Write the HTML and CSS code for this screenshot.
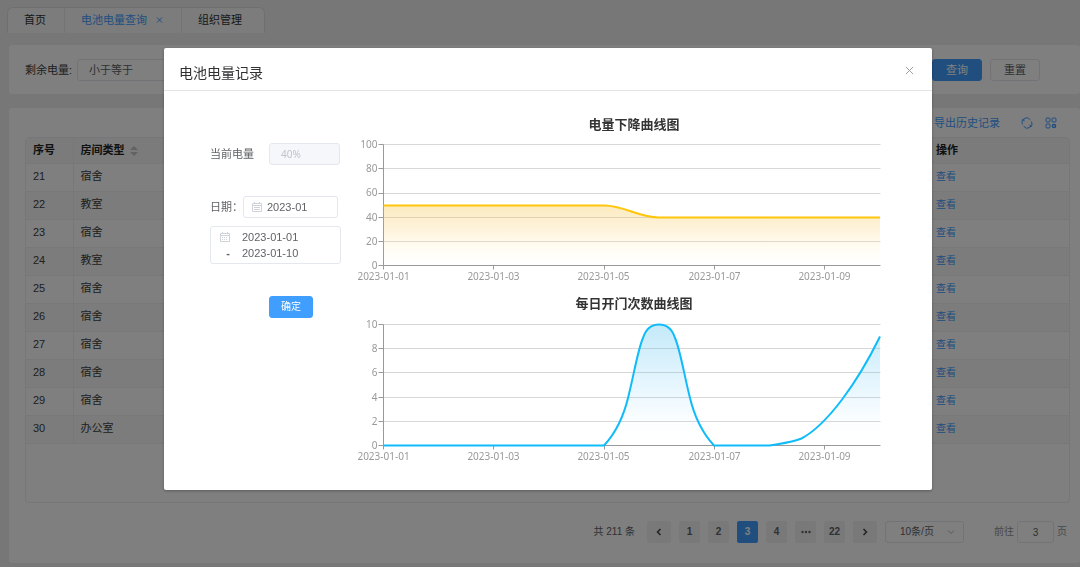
FILE: index.html
```html
<!DOCTYPE html>
<html lang="zh-CN">
<head>
<meta charset="utf-8">
<title>电池电量查询</title>
<link rel="stylesheet" href="styles.css">
</head>
<body>
<div class="page">
  <nav class="tabs">
    <a class="tab" href="#">首页</a>
    <a class="tab tab-active" href="#">电池电量查询
      <svg class="tab-close" viewBox="0 0 8 8"><path d="M2 1.5l5 5M7 1.5l-5 5"/></svg>
    </a>
    <a class="tab" href="#">组织管理</a>
  </nav>

  <form class="card filter">
    <label for="level">剩余电量:</label>
    <select id="level" class="field filter-select"><option>小于等于</option></select>
    <div class="filter-actions">
      <button type="button" class="btn btn-primary">查询</button>
      <button type="button" class="btn">重置</button>
    </div>
  </form>

  <section class="card list">
    <div class="toolbar">
      <a class="link" href="#">导出历史记录</a>
      <button type="button" class="icon-btn" aria-label="刷新">
        <svg viewBox="0 0 12 12"><path d="M1.4 7.4A4.6 4.6 0 0 1 9.4 2.9M10.6 4.6A4.6 4.6 0 0 1 2.6 9.1"/><path class="solid" d="M.8 2.2h2.6v2.6zM11.2 9.8H8.6V7.2z"/></svg>
      </button>
      <button type="button" class="icon-btn" aria-label="列设置">
        <svg viewBox="0 0 12 12"><rect x="1" y="1" width="4" height="4" rx="1"/><rect x="7" y="1" width="4" height="4" rx="1"/><rect x="1" y="7" width="4" height="4" rx="1"/><circle cx="9" cy="9" r="1.6" stroke-width="1.5"/></svg>
      </button>
    </div>
    <div class="table-box">
      <table class="table">
        <colgroup><col class="col-no"><col class="col-type"><col><col class="col-op"></colgroup>
        <thead>
          <tr><th>序号</th><th>房间类型 <svg class="sort" viewBox="0 0 8 12"><path d="M0 5l4-4 4 4zM0 7h8l-4 4z"/></svg></th><th></th><th>操作</th></tr>
        </thead>
        <tbody>
          <tr><td>21</td><td>宿舍</td><td></td><td><a class="link" href="#">查看</a></td></tr>
          <tr><td>22</td><td>教室</td><td></td><td><a class="link" href="#">查看</a></td></tr>
          <tr><td>23</td><td>宿舍</td><td></td><td><a class="link" href="#">查看</a></td></tr>
          <tr><td>24</td><td>教室</td><td></td><td><a class="link" href="#">查看</a></td></tr>
          <tr><td>25</td><td>宿舍</td><td></td><td><a class="link" href="#">查看</a></td></tr>
          <tr><td>26</td><td>宿舍</td><td></td><td><a class="link" href="#">查看</a></td></tr>
          <tr><td>27</td><td>宿舍</td><td></td><td><a class="link" href="#">查看</a></td></tr>
          <tr><td>28</td><td>宿舍</td><td></td><td><a class="link" href="#">查看</a></td></tr>
          <tr><td>29</td><td>宿舍</td><td></td><td><a class="link" href="#">查看</a></td></tr>
          <tr><td>30</td><td>办公室</td><td></td><td><a class="link" href="#">查看</a></td></tr>
        </tbody>
      </table>
    </div>
    <div class="pager">
      <span class="pager-total">共 211 条</span>
      <button type="button" class="page-btn page-arrow" aria-label="上一页"><svg viewBox="0 0 8 8"><path d="M5.5 1l-3 3 3 3"/></svg></button>
      <button type="button" class="page-btn">1</button>
      <button type="button" class="page-btn">2</button>
      <button type="button" class="page-btn page-current">3</button>
      <button type="button" class="page-btn">4</button>
      <button type="button" class="page-btn" aria-label="更多"><svg class="dots" viewBox="0 0 10 8"><circle cx="1.5" cy="4" r="1.2"/><circle cx="5" cy="4" r="1.2"/><circle cx="8.5" cy="4" r="1.2"/></svg></button>
      <button type="button" class="page-btn">22</button>
      <button type="button" class="page-btn page-arrow" aria-label="下一页"><svg viewBox="0 0 8 8"><path d="M2.5 1l3 3-3 3"/></svg></button>
      <div class="size-box">
        <select class="size-select" aria-label="每页条数"><option>10条/页</option></select>
        <svg viewBox="0 0 8 8"><path d="M1 2.5l3 3 3-3"/></svg>
      </div>
      <label class="jump">前往 <input class="field jump-input" type="text" value="3"> 页</label>
    </div>
  </section>
</div>

<div class="overlay">
  <div class="dialog" role="dialog" aria-labelledby="dialog-title">
    <header class="dialog-head">
      <h1 id="dialog-title">电池电量记录</h1>
      <button type="button" class="dialog-close" aria-label="关闭"><svg viewBox="0 0 10 10"><path d="M1 1l8 8M9 1l-8 8"/></svg></button>
    </header>
    <div class="dialog-body">
      <form class="query">
        <div class="row row-level">
          <label for="current">当前电量</label>
          <input id="current" class="field current" type="text" value="40%" disabled>
        </div>
        <div class="row row-month">
          <label for="month">日期：</label>
          <div class="field month">
            <svg class="cal" viewBox="0 0 10 10"><path d="M.5 1.5h9v8h-9zM.5 3.5h9M2.5 0v2M7.5 0v2M2 5.5h6M2 7.5h6"/></svg>
            <input id="month" type="text" value="2023-01">
          </div>
        </div>
        <div class="field range">
          <svg class="cal" viewBox="0 0 10 10"><path d="M.5 1.5h9v8h-9zM.5 3.5h9M2.5 0v2M7.5 0v2"/><path stroke-dasharray="1 1" d="M2 5.5h6M2 7.5h6"/></svg>
          <input type="text" value="2023-01-01" aria-label="开始日期">
          <span class="dash">-</span>
          <input type="text" value="2023-01-10" aria-label="结束日期">
        </div>
        <button type="button" class="btn btn-primary confirm">确定</button>
      </form>

      <div class="charts">
        <svg class="chart" viewBox="0 0 540 179" role="img" aria-label="电量下降曲线图">
          <defs><linearGradient id="fill-level" x1="0" y1="0" x2="0" y2="1"><stop offset="0" stop-color="#f3c84f" stop-opacity=".36"/><stop offset=".4" stop-color="#fbc75b" stop-opacity=".22"/><stop offset=".8" stop-color="#fff0b0" stop-opacity=".1"/><stop offset="1" stop-color="#fff" stop-opacity="0"/></linearGradient></defs>
          <text class="chart-title" x="284" y="17">电量下降曲线图</text>
          <g transform="translate(33.5 32.5)">
            <path class="grid" d="M0 0H497M0 24H497M0 49H497M0 73H497M0 97H497"/>
            <path class="axis" d="M0 0V121H497M-5 0H0M-5 24H0M-5 49H0M-5 73H0M-5 97H0M-5 121H0M0 121v4M110 121v4M221 121v4M331 121v4M441 121v4"/>
            <path fill="url(#fill-level)" d="M0 61H220.5C241 61 255 73 275.5 73H496.5V121H0z"/>
            <path class="line line-level" d="M0 61H220.5C241 61 255 73 275.5 73H496.5"/>
            <g class="y-labels"><text x="-6" y="3">100</text><text x="-6" y="27">80</text><text x="-6" y="51">60</text><text x="-6" y="76">40</text><text x="-6" y="100">20</text><text x="-6" y="124">0</text></g>
            <g class="x-labels"><text x="0" y="135">2023-01-01</text><text x="110" y="135">2023-01-03</text><text x="220" y="135">2023-01-05</text><text x="331" y="135">2023-01-07</text><text x="441" y="135">2023-01-09</text></g>
          </g>
        </svg>
        <svg class="chart" viewBox="0 0 540 179" role="img" aria-label="每日开门次数曲线图">
          <defs><linearGradient id="fill-open" x1="0" y1="0" x2="0" y2="1"><stop offset="0" stop-color="#3bb8e8" stop-opacity=".3"/><stop offset=".8" stop-color="#3bb8ff" stop-opacity=".02"/><stop offset="1" stop-color="#fff" stop-opacity="0"/></linearGradient></defs>
          <text class="chart-title" x="284" y="17">每日开门次数曲线图</text>
          <g transform="translate(33.5 33.5)">
            <path class="grid" d="M0 0H497M0 24H497M0 48H497M0 73H497M0 97H497"/>
            <path class="axis" d="M0 0V121H497M-5 0H0M-5 24H0M-5 48H0M-5 73H0M-5 97H0M-5 121H0M0 121v4M110 121v4M221 121v4M331 121v4M441 121v4"/>
            <path fill="url(#fill-open)" d="M0 121H220.5C227.5 113.5 238.5 99.5 245 71.5C250.5 49.5 254.5 24.5 259.5 13.5C262.5 4 268.5 0 275.5 0C282.5 0 288.5 4 291.5 13.5C296.5 24.5 300.5 49.5 306 71.5C312.5 99.5 323.5 113.5 330.5 121H386C397 119 408 118 418 114C444 100 474 58 496.5 12V121z"/>
            <path class="line line-open" d="M0 121H220.5C227.5 113.5 238.5 99.5 245 71.5C250.5 49.5 254.5 24.5 259.5 13.5C262.5 4 268.5 0 275.5 0C282.5 0 288.5 4 291.5 13.5C296.5 24.5 300.5 49.5 306 71.5C312.5 99.5 323.5 113.5 330.5 121H386C397 119 408 118 418 114C444 100 474 58 496.5 12"/>
            <g class="y-labels"><text x="-6" y="3">10</text><text x="-6" y="27">8</text><text x="-6" y="51">6</text><text x="-6" y="76">4</text><text x="-6" y="100">2</text><text x="-6" y="124">0</text></g>
            <g class="x-labels"><text x="0" y="135">2023-01-01</text><text x="110" y="135">2023-01-03</text><text x="220" y="135">2023-01-05</text><text x="331" y="135">2023-01-07</text><text x="441" y="135">2023-01-09</text></g>
          </g>
        </svg>
      </div>
    </div>
  </div>
</div>
</body>
</html>
```
FILE: styles.css
```css
* { box-sizing: border-box; }

body {
  margin: 0;
  background: #eeeeee;
  color: #404040;
  font: 11px/16px "Liberation Sans", "Noto Sans CJK SC", sans-serif;
}

button, input, select { font: inherit; color: inherit; }
button { cursor: pointer; }
a { text-decoration: none; color: inherit; }

.page { padding: 7px 0 3px 9px; }
.card { background: #fff; border-radius: 3px; }
.link { color: #409eff; }

.field {
  height: 22px;
  border: 1px solid #e4e7ed;
  border-radius: 3px;
  background: #fff;
  color: #606266;
}

.btn {
  width: 50px;
  height: 22px;
  padding: 0;
  border: 1px solid #e4e7ed;
  border-radius: 3px;
  background: #fff;
  color: #606266;
}
.btn-primary { border-color: #409eff; background: #409eff; color: #fff; }

/* Tabs */
.tabs {
  display: flex;
  width: max-content;
  height: 26px;
  margin-left: -2px;
  border: 1px solid #dedede;
  border-bottom: 0;
  border-radius: 6px 6px 0 0;
  background: #f8f8f8;
}
.tab { display: flex; align-items: center; gap: 8px; padding: 0 18px 2px 16px; color: #303133; }
.tab + .tab { border-left: 1px solid #e8e8e8; }
.tab:last-child { padding-right: 22px; }
.tab-active { color: #409eff; }
.tab-close { width: 8px; height: 8px; fill: none; stroke: #409eff; }

/* Filter bar */
.filter {
  display: flex;
  align-items: center;
  gap: 5px;
  height: 49px;
  margin-top: 12px;
  padding: 0 40px 0 16px;
}
.filter-select { appearance: none; width: 160px; padding: 0 11px; }
.filter-actions { display: flex; gap: 8px; margin-left: auto; }

/* List */
.list { margin-top: 14px; padding: 0 10px 20px 16px; }
.toolbar {
  display: flex;
  align-items: center;
  justify-content: flex-end;
  gap: 12px;
  height: 29px;
  padding-right: 13px;
}
.toolbar .link { margin-right: 9px; }
.icon-btn { display: flex; padding: 0; border: 0; background: none; }
.icon-btn svg { width: 12px; height: 12px; fill: none; stroke: #409eff; }
.icon-btn .solid { fill: #409eff; stroke: none; }

.table-box { min-height: 366px; border: 1px solid #ebeef5; border-radius: 4px; overflow: hidden; }
.table { width: 100%; table-layout: fixed; border-collapse: collapse; }
.col-no { width: 47px; }
.col-type { width: 120px; }
.col-op { width: 140px; }
.table th, .table td { height: 28px; padding: 0 7px 2px; text-align: left; border-bottom: 1px solid #f0f1f4; }
.table th { height: 25px; padding-bottom: 0; background: #f6f6f6; color: #222; }
.table th:first-child, .table td:first-child { border-right: 1px solid #f0f1f4; }
.table tbody tr:nth-child(even) { background: #f8f8f8; }
.table .link { font-size: 10px; }
.sort { width: 8px; height: 12px; margin-left: 2px; vertical-align: -3px; fill: #c0c4cc; }

/* Pagination */
.pager {
  display: flex;
  align-items: center;
  justify-content: flex-end;
  gap: 8px;
  margin-top: 18px;
  font-size: 10px;
  color: #606266;
}
.pager-total { margin-right: 4px; }
.page-btn {
  display: flex;
  align-items: center;
  justify-content: center;
  width: 21px;
  height: 22px;
  padding: 0;
  border: 0;
  border-radius: 2px;
  background: #f2f2f4;
  font-weight: bold;
}
.page-arrow { width: 24px; }
.page-btn svg { width: 8px; height: 8px; fill: none; stroke: #444; stroke-width: 1.5; }
.page-btn .dots { width: 10px; fill: #606266; stroke: none; }
.page-current { background: #409eff; color: #fff; }
.size-box {
  display: grid;
  grid-template-columns: 1fr 16px;
  align-items: center;
  width: 79px;
  height: 22px;
  border: 1px solid #e4e7ed;
  border-radius: 3px;
}
.size-box svg { width: 8px; height: 8px; fill: none; stroke: #b0b3ba; }
.size-select { appearance: none; padding: 0 0 0 14px; border: 0; background: none; }
.jump { display: flex; align-items: center; gap: 3px; margin: 0 3px 0 22px; color: #909399; }
.jump-input { width: 37px; padding: 0; text-align: center; }

/* Dialog */
.overlay {
  position: fixed;
  inset: 0;
  padding: 48px 0 0 16px;
  background: rgba(0, 0, 0, .5);
  overflow: auto;
}
.dialog {
  width: 90%;
  max-width: 768px;
  margin: 0 auto;
  border-radius: 2px;
  background: #fff;
  box-shadow: 0 1px 3px rgba(0, 0, 0, .3);
}
.dialog-head {
  display: flex;
  align-items: center;
  justify-content: space-between;
  height: 43px;
  padding: 3px 18px 0 15px;
  border-bottom: 1px solid #e4e4e4;
}
.dialog-head h1 { margin: 0; padding-top: 4px; font-size: 14px; line-height: 20px; font-weight: normal; color: #303133; }
.dialog-close { display: flex; padding: 0; border: 0; background: none; }
.dialog-close svg { width: 9px; height: 9px; fill: none; stroke: #909399; }
.dialog-body { display: flex; padding: 21px 0 20px 46px; }

.query { flex: 0 0 140px; padding-top: 31px; color: #606266; }
.row { display: flex; align-items: center; }
.row-level { gap: 15px; }
.row-month { margin: 31px 0 8px; }
.current {
  width: 71px;
  padding: 0 11px;
  background: #f5f7fa;
  color: #c0c4cc;
  font: 10px "Noto Sans", sans-serif;
}
.month { display: flex; align-items: center; gap: 5px; width: 95px; padding: 0 8px; }
.month input, .range input { min-width: 0; width: 100%; height: 16px; padding: 0; border: 0; background: none; }
.cal { flex: none; width: 10px; height: 10px; fill: none; stroke: #d0d3d9; }
.range {
  display: grid;
  grid-template-columns: 10px 1fr;
  column-gap: 12px;
  align-items: center;
  justify-items: center;
  width: 131px;
  height: 38px;
  padding: 2px 9px;
}
.dash { justify-self: end; font-weight: bold; }
.confirm { display: block; width: 44px; margin: 32px 0 0 59px; font-size: 10px; }

.charts { display: flex; flex-direction: column; }
.chart { display: block; width: 540px; height: 179px; }
.chart-title { font: bold 13px "Noto Sans CJK SC", sans-serif; fill: #333; text-anchor: middle; }
.grid { fill: none; stroke: #d8d8d8; }
.axis { fill: none; stroke: #999; }
.line { fill: none; stroke-width: 2; }
.line-level { stroke: #ffc60a; }
.line-open { stroke: #0fbcf9; }
.y-labels, .x-labels { font: 10px "Noto Sans", sans-serif; fill: #999; }
.y-labels { text-anchor: end; }
.x-labels { text-anchor: middle; }
```
